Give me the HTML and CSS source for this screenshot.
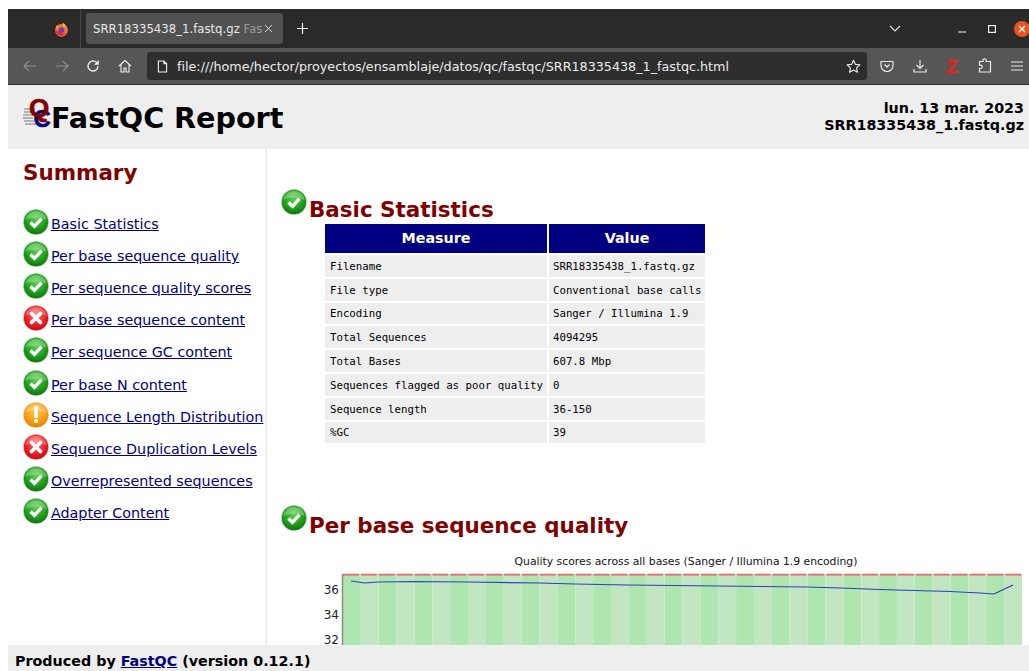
FILE: index.html
```html
<!DOCTYPE html>
<html lang="es">
<head>
<meta charset="utf-8">
<title>SRR18335438_1.fastq.gz FastQC Report</title>
<link rel="stylesheet" href="styles.css">
</head>
<body>
<svg class="defs" aria-hidden="true">
  <defs>
    <radialGradient id="g-ok" cx="50%" cy="35%" r="70%"><stop offset="0" stop-color="#5fd34f"/><stop offset=".6" stop-color="#1f9e1c"/><stop offset="1" stop-color="#0b6e0b"/></radialGradient>
    <radialGradient id="g-err" cx="50%" cy="35%" r="70%"><stop offset="0" stop-color="#ff7a7a"/><stop offset=".6" stop-color="#ee1c25"/><stop offset="1" stop-color="#b80d12"/></radialGradient>
    <radialGradient id="g-warn" cx="50%" cy="35%" r="70%"><stop offset="0" stop-color="#ffc75a"/><stop offset=".6" stop-color="#f99d12"/><stop offset="1" stop-color="#d97a05"/></radialGradient>
    <symbol id="i-ok" viewBox="0 0 26 26">
      <circle cx="13" cy="13" r="13" fill="#b9d8b9"/>
      <circle cx="13" cy="13" r="12.2" fill="url(#g-ok)"/>
      <path d="M2.500 11a10.500 9 0 0 1 21 0c-5-3-16-3-21 0z" fill="#fff" opacity=".28"/>
      <path d="M7.500 13.500l4 3.800 7-7.600" fill="none" stroke="#fff" stroke-width="3.400"/>
    </symbol>
    <symbol id="i-err" viewBox="0 0 26 26">
      <circle cx="13" cy="13" r="13" fill="#f0b9b9"/>
      <circle cx="13" cy="13" r="12.2" fill="url(#g-err)"/>
      <path d="M2.500 11a10.500 9 0 0 1 21 0c-5-3-16-3-21 0z" fill="#fff" opacity=".25"/>
      <path d="M8.500 8.500l9 9M17.500 8.500l-9 9" fill="none" stroke="#fff" stroke-width="3.800" stroke-linecap="round"/>
    </symbol>
    <symbol id="i-warn" viewBox="0 0 26 26">
      <circle cx="13" cy="13" r="13" fill="#f3d6a8"/>
      <circle cx="13" cy="13" r="12.2" fill="url(#g-warn)"/>
      <path d="M2.500 11a10.500 9 0 0 1 21 0c-5-3-16-3-21 0z" fill="#fff" opacity=".25"/>
      <path d="M13 5.500v9" fill="none" stroke="#fff" stroke-width="3.600" stroke-linecap="round"/>
      <circle cx="13" cy="19" r="2.100" fill="#fff"/>
    </symbol>
  </defs>
</svg>

<div class="window">
  <div class="tabbar">
    <div class="tabbar-start">
      <svg class="firefox" viewBox="0 0 16 16" width="15" height="15">
        <circle cx="8" cy="8.800" r="6.800" fill="#f7762b"/>
        <path d="M1.300 8a6.800 6.800 0 0 0 13.400 1.500c-1 2-3 3-5 2.800-2-.2-3-1.200-3.500-2.500-1.500.5-3.500 0-4.900-1.800z" fill="#e5283f"/>
        <circle cx="8" cy="8.600" r="3.100" fill="#6f38c9"/>
        <path d="M9 .8c2 1 3.500 2.500 4 4.500L9.500 4.500z" fill="#ffc52e"/>
        <path d="M3 3l1.500 2.500L2 6z" fill="#ffb02e"/>
      </svg>
    </div>
    <div class="tab">
      <span class="tab-title">SRR18335438_1.fastq.gz <span class="tab-fade">Fas</span></span>
      <svg class="tab-close" viewBox="0 0 10 10" width="9" height="9"><path d="M1 1l8 8M9 1l-8 8" stroke="#d8d8d8" stroke-width="1.100" fill="none"/></svg>
    </div>
    <svg class="newtab" viewBox="0 0 12 12" width="11" height="11"><path d="M6 0v12M0 6h12" stroke="#f0f0f0" stroke-width="1.300" fill="none"/></svg>
    <div class="tabbar-end">
      <svg class="tabs-menu" viewBox="0 0 12 7" width="12" height="7"><path d="M1 1l5 5 5-5" stroke="#e0e0e0" stroke-width="1.200" fill="none"/></svg>
      <svg class="win-min" viewBox="0 0 8 2" width="8" height="2"><path d="M0 1h8" stroke="#bdbdbd" stroke-width="1.400"/></svg>
      <svg class="win-max" viewBox="0 0 8 8" width="8" height="8"><rect x=".6" y=".6" width="6.800" height="6.800" stroke="#f0f0f0" stroke-width="1.200" fill="none"/></svg>
      <svg class="win-close" viewBox="0 0 16 16" width="16" height="16"><circle cx="8" cy="8" r="8" fill="#e95420"/><path d="M5 5l6 6M11 5l-6 6" stroke="#fff" stroke-width="1.300" fill="none"/></svg>
    </div>
  </div>

  <div class="toolbar">
    <div class="nav">
      <svg viewBox="0 0 14 12" width="14" height="12"><path d="M13 6H1M6 1L1 6l5 5" stroke="#8f8f8f" stroke-width="1.100" fill="none"/></svg>
      <svg viewBox="0 0 14 12" width="14" height="12"><path d="M1 6h12M8 1l5 5-5 5" stroke="#8f8f8f" stroke-width="1.100" fill="none"/></svg>
      <svg viewBox="0 0 14 14" width="14" height="14"><path d="M12 7a5 5 0 1 1-1.500-3.600L12 5" stroke="#f0f0f0" stroke-width="1.300" fill="none"/><path d="M12.800 1v4.800H8" fill="#f0f0f0"/></svg>
      <svg viewBox="0 0 14 14" width="14" height="14"><path d="M1 7l6-5.500L13 7M3 5.800V13h3V9h2v4h3V5.800" stroke="#f0f0f0" stroke-width="1.100" fill="none"/></svg>
    </div>
    <div class="urlbar">
      <svg viewBox="0 0 12 14" width="11" height="13"><path d="M1.500 1h6l3 3v9h-9zM7.500 1v3h3" stroke="#f0f0f0" stroke-width="1.200" fill="none"/></svg>
      <span class="url">file:///home/hector/proyectos/ensamblaje/datos/qc/fastqc/SRR18335438_1_fastqc.html</span>
      <svg class="star" viewBox="0 0 16 16" width="15" height="15"><path d="M8 1.300l2 4.400 4.800.5-3.600 3.200 1 4.700L8 11.700l-4.200 2.400 1-4.700L1.200 6.200 6 5.700z" stroke="#f0f0f0" stroke-width="1.200" fill="none" stroke-linejoin="round"/></svg>
    </div>
    <div class="actions">
      <svg viewBox="0 0 14 14" width="14" height="14"><path d="M1 2.500h12v4a6 6 0 0 1-12 0z" stroke="#e8e8e8" stroke-width="1.200" fill="none" stroke-linejoin="round"/><path d="M4.500 5.500L7 8l2.500-2.500" stroke="#e8e8e8" stroke-width="1.300" fill="none"/></svg>
      <svg viewBox="0 0 14 14" width="14" height="14"><path d="M7 1v8M3.500 6L7 9.500 10.500 6M1 10v3h12v-3" stroke="#e8e8e8" stroke-width="1.200" fill="none"/></svg>
      <span class="zotero">Z</span>
      <svg viewBox="0 0 14 16" width="14" height="16"><path d="M5 3.500V2.500a1.600 1.600 0 0 1 3.200 0v1h4.300v10.500H1.500v-3.500h1a1.700 1.700 0 0 0 0-3.400h-1V3.500z" stroke="#e8e8e8" stroke-width="1.200" fill="none"/></svg>
      <svg viewBox="0 0 12 10" width="12" height="10"><path d="M0 1h12M0 5h12M0 9h12" stroke="#e8e8e8" stroke-width="1.200"/></svg>
    </div>
  </div>

  <header class="report-head">
    <div class="report-title">
      <svg class="logo" viewBox="0 0 30 32" width="30" height="32">
        <path d="M1 10h11M1 13h10M0 16h10M0 19h10M1 22h10M2 25h11" stroke="#777" stroke-width="1"/>
        <text class="logo-c" x="10.500" y="27.500">C</text>
        <text class="logo-q" x="6" y="18">Q</text>
      </svg>
      <h1>FastQC Report</h1>
    </div>
    <div class="report-meta">
      <div>lun. 13 mar. 2023</div>
      <div>SRR18335438_1.fastq.gz</div>
    </div>
  </header>

  <div class="report-body">
    <nav class="summary">
      <h2>Summary</h2>
      <ul>
        <li><svg class="status"><use href="#i-ok"/></svg><a href="#basic">Basic Statistics</a></li>
        <li><svg class="status"><use href="#i-ok"/></svg><a href="#pbsq">Per base sequence quality</a></li>
        <li><svg class="status"><use href="#i-ok"/></svg><a href="#psqs">Per sequence quality scores</a></li>
        <li><svg class="status"><use href="#i-err"/></svg><a href="#pbsc">Per base sequence content</a></li>
        <li><svg class="status"><use href="#i-ok"/></svg><a href="#psgc">Per sequence GC content</a></li>
        <li><svg class="status"><use href="#i-ok"/></svg><a href="#pbn">Per base N content</a></li>
        <li><svg class="status"><use href="#i-warn"/></svg><a href="#sld">Sequence Length Distribution</a></li>
        <li><svg class="status"><use href="#i-err"/></svg><a href="#sdl">Sequence Duplication Levels</a></li>
        <li><svg class="status"><use href="#i-ok"/></svg><a href="#os">Overrepresented sequences</a></li>
        <li><svg class="status"><use href="#i-ok"/></svg><a href="#ac">Adapter Content</a></li>
      </ul>
    </nav>

    <main class="modules">
      <section class="module" id="basic">
        <h2><svg class="status"><use href="#i-ok"/></svg>Basic Statistics</h2>
        <table>
          <thead><tr><th class="col-measure">Measure</th><th class="col-value">Value</th></tr></thead>
          <tbody>
            <tr><td>Filename</td><td>SRR18335438_1.fastq.gz</td></tr>
            <tr><td>File type</td><td>Conventional base calls</td></tr>
            <tr><td>Encoding</td><td>Sanger / Illumina 1.9</td></tr>
            <tr><td>Total Sequences</td><td>4094295</td></tr>
            <tr><td>Total Bases</td><td>607.8 Mbp</td></tr>
            <tr><td>Sequences flagged as poor quality</td><td>0</td></tr>
            <tr><td>Sequence length</td><td>36-150</td></tr>
            <tr><td>%GC</td><td>39</td></tr>
          </tbody>
        </table>
      </section>

      <section class="module module-next" id="pbsq">
        <h2><svg class="status"><use href="#i-ok"/></svg>Per base sequence quality</h2>
        <svg class="chart" viewBox="0 0 760 91" width="760" height="91">
          <g id="stripes"></g>
          <path class="limit" d="M76 20.600H755"/>
          <path class="axis" d="M75.500 20V91"/>
          <polyline class="mean" points="84,27 98,29 111,28 147,27.500 201,28 273,29 308,30 361,31 540,33 573,34 613,35.500 648,36.500 683,37.500 713,39 727,40 746,31"/>
          <text class="chart-title" x="419" y="11">Quality scores across all bases (Sanger / Illumina 1.9 encoding)</text>
          <text class="tick" x="72" y="39.500">36</text>
          <text class="tick" x="72" y="64.500">34</text>
          <text class="tick" x="72" y="90">32</text>
        </svg>
      </section>
    </main>
  </div>

  <footer class="report-foot">Produced by <a href="#fastqc">FastQC</a> (version 0.12.1)</footer>
</div>
<script src="chart.js"></script>
</body>
</html>
```

FILE: chart.js
```js
// Alternating background bands, one per base position group.
const stripes = document.getElementById('stripes');
const NS = 'http://www.w3.org/2000/svg';
const bandWidth = 679 / 38;
for (let i = 0; i < 38; i++) {
  const rect = document.createElementNS(NS, 'rect');
  rect.setAttribute('x', 76 + i * bandWidth);
  rect.setAttribute('y', 20);
  rect.setAttribute('width', bandWidth);
  rect.setAttribute('height', 71);
  rect.setAttribute('fill', i % 2 ? '#c1e6c1' : '#afe6af');
  stripes.appendChild(rect);
}
```

FILE: styles.css
```css
* { box-sizing: border-box; }

html, body {
  margin: 0;
  height: 100%;
  overflow: hidden;
  background: #fff;
}

body {
  padding: 9px 0 0 8px;
  font-family: "DejaVu Sans", sans-serif;
  font-size: 14.300px;
  color: #000;
}

.defs { position: absolute; width: 0; height: 0; }

.window {
  display: flex;
  flex-direction: column;
  height: 662px;
  overflow: hidden;
}

/* Browser chrome */
.tabbar {
  display: flex;
  align-items: center;
  height: 39px;
  background: #2b2a2a;
  flex: none;
}

.tabbar-start {
  width: 73px;
  height: 100%;
  display: flex;
  align-items: center;
  justify-content: flex-end;
  padding: 1px 11px 0 0;
  border-right: 1px solid #444;
}

.firefox { display: block; }

.tab {
  margin-left: 5px;
  width: 197px;
  height: 31px;
  background: #525151;
  border-radius: 3px;
  display: flex;
  align-items: center;
  padding: 0 10px 0 7px;
  color: #e8e8e8;
  font-size: 11.700px;
  flex: none;
}

.tab-title { flex: 1; white-space: nowrap; }
.tab-fade { color: #9a9a9a; }
.tab-close { flex: none; }

.newtab { margin-left: 14px; }

.tabbar-end {
  margin-left: auto;
  margin-right: -1px;
  display: flex;
  align-items: center;
}

.win-min { margin-left: 57px; margin-top: 6px; }
.win-max { margin-left: 22px; }
.win-close { margin-left: 18px; }

.toolbar {
  display: flex;
  align-items: center;
  height: 37px;
  background: #565656;
  border-bottom: 1px solid #2b2a2a;
  flex: none;
}

.nav {
  display: flex;
  align-items: center;
  gap: 17.700px;
  padding-left: 15px;
  width: 139px;
  flex: none;
}

.nav svg, .actions svg { display: block; flex: none; }

.urlbar {
  width: 720px;
  height: 28px;
  background: #2f2e2f;
  border-radius: 3px;
  display: flex;
  align-items: center;
  padding: 0 6px 0 10px;
  flex: none;
}

.url {
  margin-left: 9px;
  font-size: 12.720px;
  color: #ececec;
  white-space: nowrap;
  flex: 1;
}

.actions {
  display: flex;
  align-items: center;
  gap: 18.700px;
  padding-left: 13px;
  flex: none;
}

.zotero {
  width: 14px;
  font-family: "Liberation Sans", sans-serif;
  font-size: 19px;
  font-weight: bold;
  line-height: 1;
  color: #cf2c25;
  -webkit-text-stroke: 0.8px #cf2c25;
  text-align: center;
}

/* Report header */
.report-head {
  display: flex;
  justify-content: space-between;
  align-items: flex-start;
  height: 64px;
  background: #eee;
  flex: none;
  padding: 14px 5px 0 15px;
}

.report-title { display: flex; align-items: flex-start; }
.logo { display: block; margin-right: -2px; overflow: visible; }
.logo-q { font: bold 26px "Liberation Sans", sans-serif; fill: #800000; stroke: #800000; stroke-width: 0.7px; }
.logo-c { font: bold 24px "Liberation Sans", sans-serif; fill: #000080; stroke: #000080; stroke-width: 0.5px; }

.report-title h1 {
  margin: 0;
  font-size: 28.600px;
  font-weight: bold;
  line-height: 36px;
  padding-top: 1px;
}

.report-meta {
  text-align: right;
  font-weight: bold;
  line-height: 17px;
  padding-top: 1px;
}

/* Body columns */
.report-body {
  display: flex;
  flex: 1;
  min-height: 0;
  overflow: hidden;
}

.summary {
  width: 259px;
  flex: none;
  border-right: 2px solid #eee;
  padding: 9px 0 0 15px;
}

.summary h2,
.module h2 {
  margin: 0;
  color: #800000;
  font-size: 21.450px;
  font-weight: bold;
}

.summary h2 { line-height: 30px; }

.summary ul {
  list-style: none;
  margin: 20px 0 0;
  padding: 0;
}

.summary li {
  display: flex;
  align-items: center;
  height: 32.100px;
  white-space: nowrap;
}

.summary .status { margin: 0 2px 4px 0; }

.status {
  display: block;
  flex: none;
  width: 26px;
  height: 26px;
}

a { color: #000080; }

/* Modules */
.modules {
  flex: 1;
  min-width: 0;
  padding: 47px 0 0 14px;
  overflow: hidden;
}

.module h2 {
  display: flex;
  align-items: flex-start;
  line-height: 28px;
  white-space: nowrap;
}

.module h2 .status {
  margin-right: 2px;
  position: relative;
  top: -7px;
}

table {
  margin-left: 42px;
  border-spacing: 2px;
  border-collapse: separate;
  margin-top: -2px;
}

th {
  background: #000080;
  color: #fff;
  font-size: 14.300px;
  font-weight: bold;
  height: 29px;
  padding: 0 0 2px;
}

.col-measure { width: 222px; }
.col-value { width: 156px; }

td {
  background: #eee;
  font-family: "DejaVu Sans Mono", monospace;
  font-size: 10.720px;
  height: 21.800px;
  padding: 1px 3px 0 4px;
  white-space: nowrap;
}

td:first-child { padding-left: 5px; }

.module-next { margin-top: 67px; }

.chart { display: block; margin-left: -14px; margin-top: 14px; }

.limit { stroke: #e26a6a; stroke-width: 1.800; stroke-dasharray: 15.900 2; fill: none; }
.axis { stroke: #8a8a8a; stroke-width: 1.500; fill: none; }
.mean { stroke: #2b3fc4; stroke-width: 1.200; fill: none; }
.chart-title { font-size: 10.800px; text-anchor: middle; fill: #111; }
.tick { font-size: 12px; text-anchor: end; fill: #222; }

/* Footer */
.report-foot {
  flex: none;
  height: 26px;
  background: #eee;
  padding: 7px 0 0 7px;
  font-weight: bold;
  line-height: 18px;
}
```
